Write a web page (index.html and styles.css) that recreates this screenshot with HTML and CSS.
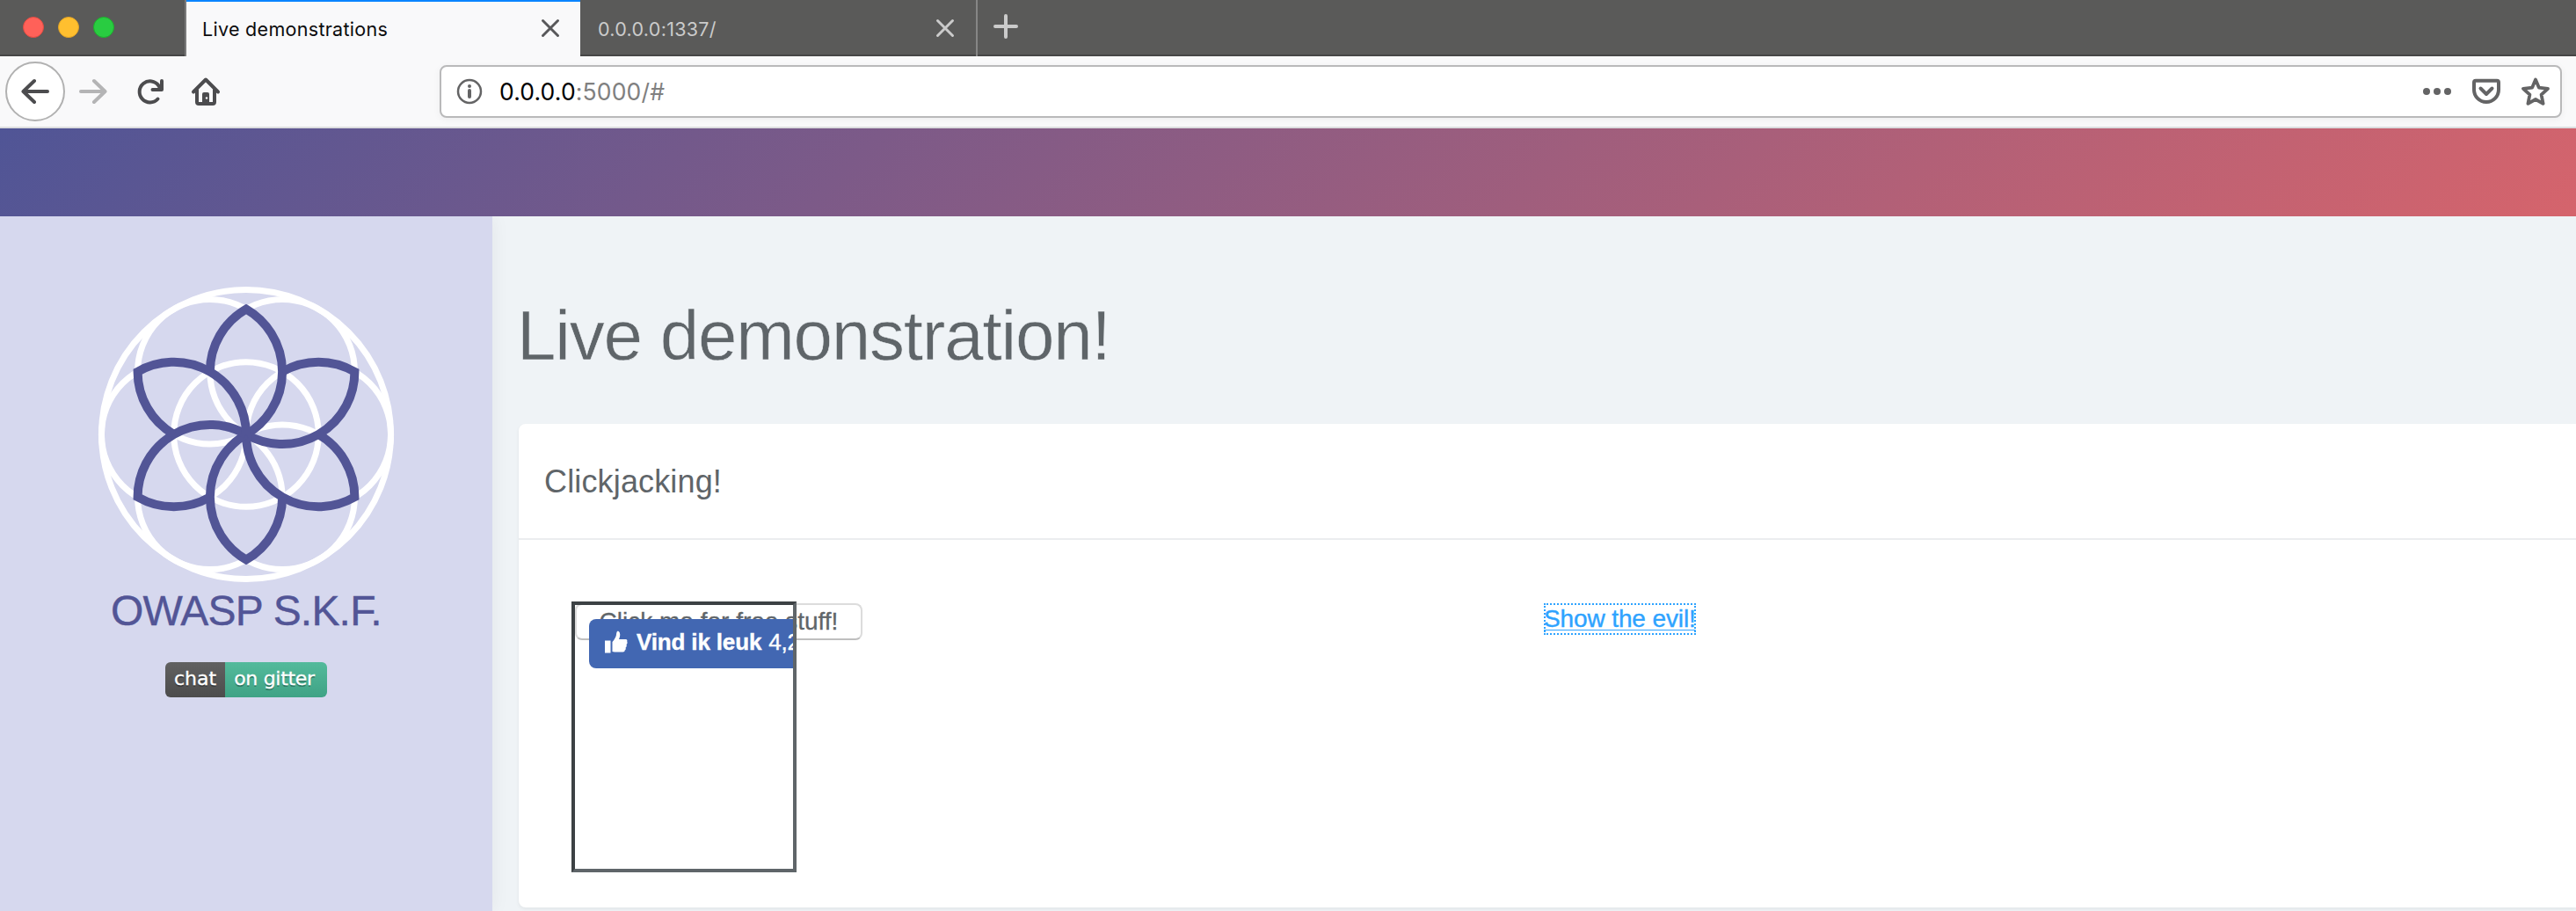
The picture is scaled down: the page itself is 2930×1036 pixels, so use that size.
FILE: index.html
```html
<!DOCTYPE html>
<html lang="en">
<head>
<meta charset="utf-8">
<title>Live demonstrations</title>
<link rel="stylesheet" href="styles.css">
</head>
<body>
<div class="tabbar">
  <div class="lights"><span class="light red"></span><span class="light yellow"></span><span class="light green"></span></div>
  <div class="tab active"><span class="tab-title">Live demonstrations</span>
    <svg class="close" width="22" height="22" viewBox="0 0 22 22"><path d="M2.500 2.500 19.500 19.500M19.500 2.500 2.500 19.500"/></svg></div>
  <div class="tab"><span class="tab-title second">0.0.0.0:1337/</span>
    <svg class="close" width="22" height="22" viewBox="0 0 22 22"><path d="M2.500 2.500 19.500 19.500M19.500 2.500 2.500 19.500"/></svg></div>
  <svg class="plus" width="28" height="28" viewBox="0 0 28 28"><path d="M14 2V26M2 14H26"/></svg>
</div>
<div class="toolbar">
  <div class="nav">
    <span class="back"><svg width="32" height="32" viewBox="0 0 32 32"><path d="M30 16H3M15 4 2.500 16 15 28"/></svg></span>
    <svg class="forward" width="32" height="32" viewBox="0 0 32 32"><path d="M2 16H29M17 4 29.500 16 17 28"/></svg>
    <svg class="reload" width="32" height="32" viewBox="0 0 32 32"><path d="M24.500 24.500A12 12 0 1 1 25.500 9.500M29 4V14H18.500"/><path class="solid" d="M29 7V14H22z"/></svg>
    <svg class="home" width="34" height="34" viewBox="0 0 34 34"><path d="M3 17.500 17 3.500 31 17.500M7 15V29Q7 31 9 31H25Q27 31 27 29V15"/><path class="solid" d="M13 31V20q0-2 2-2h4q2 0 2 2v11z"/><circle cx="18" cy="24.500" r="1.200" fill="#f9f9fa"/></svg>
  </div>
  <div class="urlbar">
    <svg class="info" width="30" height="30" viewBox="0 0 30 30"><circle cx="15" cy="15" r="13"/><path d="M15 14V21"/><circle class="dot" cx="15" cy="9" r="2"/></svg>
    <span class="url"><b>0.0.0.0</b>:5000/#</span>
    <svg class="dots" width="32" height="32" viewBox="0 0 32 32"><circle cx="4" cy="16" r="4"/><circle cx="16" cy="16" r="4"/><circle cx="28" cy="16" r="4"/></svg>
    <svg class="pocket" width="32" height="32" viewBox="0 0 32 32"><path d="M4 3.800H28Q30 3.800 30 5.800V14A14 14 0 0 1 2 14V5.800Q2 3.800 4 3.800Z"/><path d="M9.500 12.500 16 19 22.500 12.500"/></svg>
    <svg class="star" width="32" height="32" viewBox="0 0 32 32"><path d="M16 2.500 19.800 11.600 30 12.800 22.600 19.700 24.600 29.800 16 25 7.400 29.800 9.400 19.700 2 12.800 12.200 11.600Z"/></svg>
  </div>
</div>
<div class="banner"></div>
<div class="page">
  <aside class="sidebar">
    <svg class="logo" width="340" height="340" viewBox="-170 -170 340 340">
      <defs><path id="petal" d="M0 0A82.300 82.300 0 0 0 0-142.500A82.300 82.300 0 0 0-41.150-71.300"/></defs>
      <g class="rings"><circle r="164.500"/><circle r="82.300"/><circle cx="82.300" r="82.300"/><circle cx="41.150" cy="71.300" r="82.300"/><circle cx="-41.150" cy="71.300" r="82.300"/><circle cx="-82.300" r="82.300"/><circle cx="-41.150" cy="-71.300" r="82.300"/><circle cx="41.150" cy="-71.300" r="82.300"/></g>
      <g class="petals"><use href="#petal"/><use href="#petal" transform="rotate(60)"/><use href="#petal" transform="rotate(120)"/><use href="#petal" transform="rotate(180)"/><use href="#petal" transform="rotate(240)"/><use href="#petal" transform="rotate(300)"/></g>
    </svg>
    <div class="brand">OWASP S.K.F.</div>
    <div class="gitter"><span class="chat">chat</span><span class="on">on gitter</span></div>
  </aside>
  <main class="content">
    <h1>Live demonstration!</h1>
    <section class="card">
      <h2>Clickjacking!</h2>
      <div class="card-body">
        <div class="demo">
          <button class="bait">Click me for free stuff!</button>
          <div class="frame"><div class="like"><svg width="26" height="26" viewBox="0 0 26 26"><path d="M0 11.500H6.500V25.500H0ZM8.500 24V13Q13 8 13.200 3Q13.500.5 15 .5Q18 1.500 17 7L16 10H24Q26 10.500 25.200 12.800Q26.200 14.500 24.500 16Q25.400 18.200 23.600 19.500Q24.200 21.800 22.600 22.500Q23 24.500 20.500 24.500H11Z"/></svg><b>Vind ik leuk</b><span>4,2</span></div></div>
        </div>
        <a class="evil" href="#">Show the evil!</a>
      </div>
    </section>
  </main>
</div>
</body>
</html>
```
FILE: styles.css
```css
* { box-sizing: border-box; }
body { margin: 0; width: 2930px; height: 1036px; overflow: hidden; background: #eff3f6; font-family: "Liberation Sans", Arial, sans-serif; color: #5f6569; }
svg { display: block; fill: none; flex: none; stroke-linecap: round; stroke-linejoin: round; }

.tabbar { display: flex; height: 64px; background: #5a5a59; box-shadow: inset 0 -2px #464646; font-family: Inter, sans-serif; }
.lights { display: flex; width: 212px; padding: 19px 0 0 26px; gap: 16px; border-right: 2px solid #7b7b7b; }
.light { width: 24px; height: 24px; border-radius: 50%; border: 1px solid; }
.red { background: #ff6159; border-color: #e24b41; }
.yellow { background: #ffbf2f; border-color: #e1a325; }
.green { background: #29cc41; border-color: #1dae2c; }
.tab { display: flex; align-items: flex-start; justify-content: space-between; width: 452px; height: 64px; padding: 0 24px 0 20px; border-right: 2px solid #868686; color: #cbcbcb; }
.tab.active { width: 448px; padding: 0 23px 0 18px; background: #f9f9fa; border-top: 2px solid #0a84ff; border-right: 0; color: #0c0c0d; }
.tab-title { font-size: 21.500px; line-height: 26px; margin-top: 20px; letter-spacing: .3px; white-space: nowrap; }
.active .tab-title { margin-top: 18px; }
.close { margin-top: 21px; stroke: #cbcbcb; stroke-width: 3; }
.active .close { margin-top: 19px; stroke: #58585a; }
.plus { margin: 16px 0 0 18px; stroke: #cbcbcb; stroke-width: 4; }

.toolbar { display: flex; height: 82px; background: #f9f9fa; border-bottom: 2px solid #dcdddf; }
.nav { display: flex; align-items: center; width: 500px; padding-left: 6px; stroke: #4c4c4e; stroke-width: 4; }
.nav .solid { fill: #4c4c4e; stroke: none; }
.back { display: flex; align-items: center; justify-content: center; width: 68px; height: 68px; border: 2px solid #b1b1b1; border-radius: 50%; background: #fff; }
.forward { margin-left: 16px; stroke: #b4b4b5; }
.reload { margin-left: 33px; }
.home { margin-left: 30px; }
.home circle { stroke: none; }
.urlbar { display: flex; align-items: center; width: 2414px; height: 60px; margin-top: 10px; padding: 0 12px 0 17px; border: 2px solid #b9b9ba; border-radius: 8px; background: #fff; box-shadow: 0 2px 8px #0000000d; }
.info { stroke: #646465; stroke-width: 2.500; }
.info path { stroke-width: 4; }
.dot { fill: #646465; stroke: none; }
.url { flex: 1; margin-left: 19px; font: 26.500px/32px Inter, sans-serif; letter-spacing: .15px; color: #808080; }
.url b { font-weight: 400; color: #000; }
.dots { fill: #646465; }
.pocket { margin-left: 24px; stroke: #646465; stroke-width: 4; }
.star { margin-left: 24px; stroke: #646465; stroke-width: 3.800; }

.banner { height: 100px; background: linear-gradient(135deg, #505596, #d5646c); }
.page { display: flex; height: 790px; }
.sidebar { display: flex; flex-direction: column; align-items: center; width: 560px; height: 790px; padding-top: 78px; background: #d6d8ee; box-shadow: 0 0 20px #0000000f; clip-path: inset(0 -30px 0 0); }
.rings { stroke: #fff; stroke-width: 7; }
.petals { stroke: #525596; stroke-width: 10; stroke-linecap: butt; stroke-linejoin: miter; }
.brand { margin-top: 3px; font-size: 48px; line-height: 56px; letter-spacing: -.8px; color: #525596; -webkit-text-stroke: .4px #525596; white-space: nowrap; }
.gitter { display: flex; width: 184px; height: 40px; margin-top: 30px; border-radius: 6px; overflow: hidden; background: linear-gradient(#ffffff12, #0000001a), linear-gradient(90deg, #555 68px, #46b594 68px); color: #fff; font: 22px/38px "DejaVu Sans", sans-serif; text-shadow: 0 2px #0000004d; -webkit-text-stroke: .3px #fff; }
.gitter span { text-align: center; white-space: nowrap; }
.chat { width: 68px; }
.on { width: 116px; padding-right: 4px; letter-spacing: -.3px; }

.content { width: 2370px; padding: 90px 0 0 30px; }
h1 { margin: 0 0 0 -2px; font-size: 80px; font-weight: 400; line-height: 92px; letter-spacing: -1.250px; -webkit-text-stroke: .6px #eff3f6; white-space: nowrap; }
.card { width: 2340px; height: 550px; margin-top: 54px; border-radius: 8px 0 0 8px; background: #fff; box-shadow: 0 2px 4px #0000000f; }
h2 { height: 132px; margin: 0; padding: 45px 0 0 29px; border-bottom: 2px solid #ebedef; font-size: 36px; font-weight: 400; line-height: 42px; letter-spacing: .15px; }
.card-body { display: flex; padding: 70px 0 0 60px; }
.demo { position: relative; width: 1106px; padding: 2px 0 0 4px; }
.bait { display: block; width: 327px; height: 42px; padding: 0; border: 2px solid #dcdcdc; border-bottom-color: #bfbfbf; border-radius: 8px; background: #fff; color: #5f6569; font: 28px/38px "Liberation Sans", sans-serif; -webkit-text-stroke: .3px #5f6569; }
.frame { position: absolute; left: 0; top: 0; width: 256px; height: 308px; padding: 16px 0 0 16px; border: 4px solid; border-color: #3c4144 #5f6569 #5f6569 #3c4144; overflow: hidden; }
.like { display: flex; width: 260px; height: 56px; padding: 0 0 0 18px; border-radius: 8px; background: #4267b2; color: #fff; font-size: 26px; line-height: 53px; letter-spacing: -.15px; white-space: nowrap; }
.like svg { margin: 13px 10px 0 0; fill: #fff; }
.like b { -webkit-text-stroke: .4px #fff; }
.like span { margin-left: 8px; -webkit-text-stroke: .4px #fff; }
.evil { height: 36px; margin-top: 2px; outline: 2px dotted #2ea3ff; outline-offset: -2px; color: #2ea3ff; font-size: 28px; line-height: 36px; letter-spacing: -.12px; text-decoration: underline; text-decoration-thickness: 1px; text-underline-offset: 3px; -webkit-text-stroke: .4px #2ea3ff; white-space: nowrap; }
```
